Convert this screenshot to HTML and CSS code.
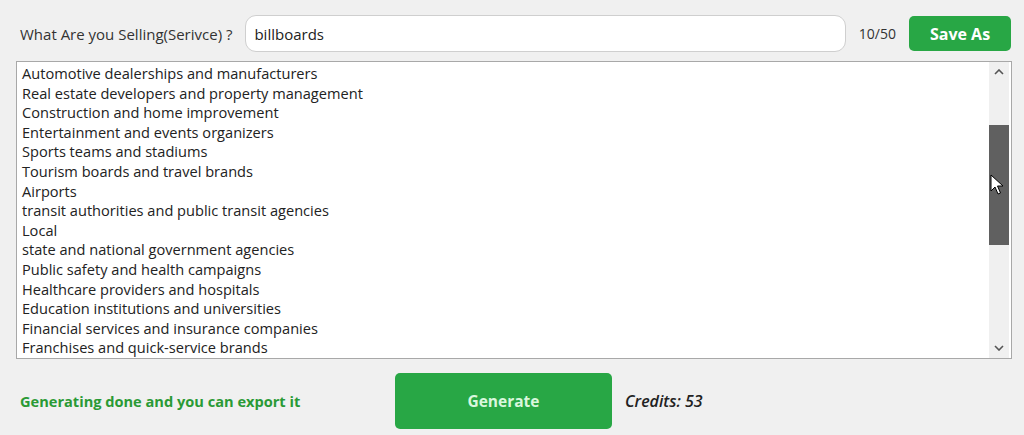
FILE: index.html
```html
<!DOCTYPE html>
<html lang="en">
<head>
    <meta charset="UTF-8">
    <meta name="viewport" content="width=device-width, initial-scale=1.0">
    <title>Target Audience Generator</title>
    <link rel="stylesheet" href="styles.css">
</head>
<body>
    <div class="top-row">
        <label for="service">What Are you Selling(Serivce) ?</label>
        <input type="text" id="service" value="billboards">
        <span class="counter">10/50</span>
        <button class="save-btn">Save As</button>
    </div>

    <div class="listbox">
        <div class="list-items">
            <div class="item">Automotive dealerships and manufacturers</div>
            <div class="item">Real estate developers and property management</div>
            <div class="item">Construction and home improvement</div>
            <div class="item">Entertainment and events organizers</div>
            <div class="item">Sports teams and stadiums</div>
            <div class="item">Tourism boards and travel brands</div>
            <div class="item">Airports</div>
            <div class="item">transit authorities and public transit agencies</div>
            <div class="item">Local</div>
            <div class="item">state and national government agencies</div>
            <div class="item">Public safety and health campaigns</div>
            <div class="item">Healthcare providers and hospitals</div>
            <div class="item">Education institutions and universities</div>
            <div class="item">Financial services and insurance companies</div>
            <div class="item">Franchises and quick-service brands</div>
        </div>
        <div class="scrollbar">
            <svg class="arrow" width="10" height="6" viewBox="0 0 10 6"><path d="M1 5 L5 1 L9 5" fill="none" stroke="#555" stroke-width="1.6"/></svg>
            <div class="track">
                <div class="thumb"></div>
            </div>
            <svg class="arrow" width="10" height="6" viewBox="0 0 10 6"><path d="M1 1 L5 5 L9 1" fill="none" stroke="#555" stroke-width="1.6"/></svg>
        </div>
        <!-- pointeur de souris sur la barre -->
        <svg class="cursor" width="14" height="22" viewBox="0 0 14 22">
            <path d="M1 1 L1 17 L5 13 L8 20 L10.5 19 L7.5 12 L13 12 Z" fill="#fff" stroke="#000" stroke-width="1"/>
        </svg>
    </div>

    <div class="bottom-row">
        <span class="status">Generating done and you can export it</span>
        <button class="generate-btn">Generate</button>
        <span class="credits">Credits: 53</span>
    </div>
</body>
</html>
```

FILE: styles.css
```css
body {
    margin: 0;
    background-color: #f0f0f0;
    font-family: "Open Sans", "Noto Sans", sans-serif;
    color: #222;
}
.top-row {
    display: flex;
    align-items: center;
    padding: 15px 13px 0 20px;
    height: 37px;
}
.top-row label {
    font-size: 15px;
    margin-right: 13px;
    color: #333;
}
.top-row input {
    flex: 1;
    height: 37px;
    box-sizing: border-box;
    border: 1px solid #cfcfcf;
    border-radius: 11px;
    background: white;
    padding: 0 8px;
    font-family: inherit;
    font-size: 15px;
    color: #222;
    outline: none;
}
.counter {
    font-size: 14px;
    margin: 0 13px;
    color: #333;
}
.save-btn {
    width: 102px;
    height: 35px;
    border: none;
    border-radius: 5px;
    background-color: #28a745;
    color: white;
    font-family: inherit;
    font-size: 16px;
    font-weight: bold;
}
.listbox {
    position: relative;
    display: flex;
    margin: 9px 12px 0 16px;
    height: 298px;
    box-sizing: border-box;
    border: 1px solid #a8a8a8;
    background: white;
}
.list-items {
    flex: 1;
    padding: 2px 5px;
    overflow: hidden;
    font-size: 14.6px;
    line-height: 19.6px;
    color: #222;
}
.scrollbar {
    width: 20px;
    margin-right: 2px;
    background-color: #f0f0f0;
    display: flex;
    flex-direction: column;
    align-items: center;
}
.arrow {
    margin: 7px 0;
}
.track {
    flex: 1;
    width: 100%;
    padding-top: 43px;
}
.thumb {
    height: 120px;
    background-color: #606060;
}
.cursor {
    position: absolute;
    left: 973px;
    top: 112px;
}
.bottom-row {
    display: flex;
    align-items: center;
    padding: 14px 0 0 20px;
}
.status {
    width: 375px;
    color: #2a9a35;
    font-size: 14.6px;
    font-weight: bold;
}
.generate-btn {
    width: 217px;
    height: 56px;
    border: none;
    border-radius: 5px;
    background-color: #28a745;
    color: #d9f7dd;
    font-family: inherit;
    font-size: 15.5px;
    font-weight: bold;
}
.credits {
    margin-left: 13px;
    font-size: 16px;
    font-style: italic;
    font-weight: 600;
    color: #222;
}
```
